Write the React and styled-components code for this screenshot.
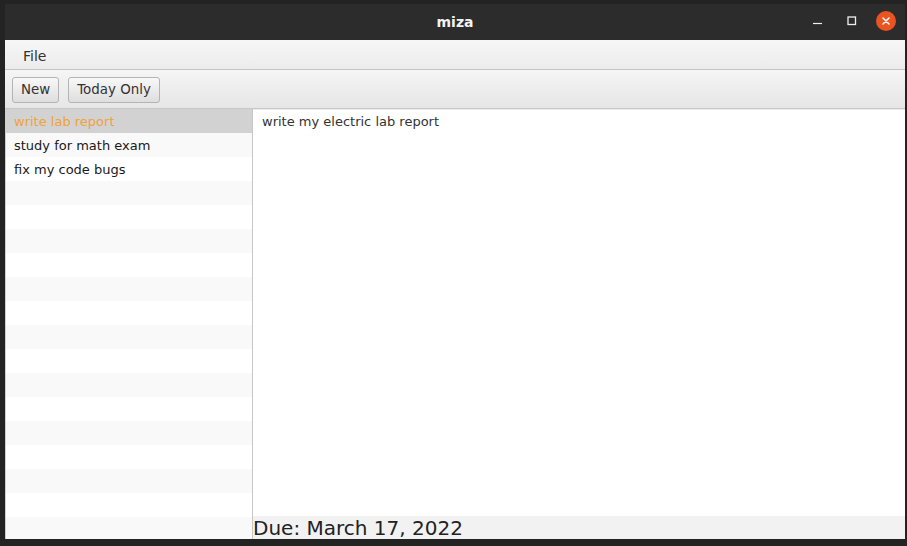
import styled, { createGlobalStyle } from "styled-components";

const Global = createGlobalStyle`
  html, body {
    margin: 0;
    padding: 0;
    background: #242424;
    overflow: hidden;
  }
  * { box-sizing: border-box; }
`;

const Desktop = styled.div`
  width: 907px;
  height: 546px;
  padding: 4px 2px 7px 5px;
  background: #232323;
  font-family: "DejaVu Sans", "Liberation Sans", sans-serif;
`;

const Window = styled.div`
  width: 900px;
  height: 535px;
  display: flex;
  flex-direction: column;
  background: #f4f4f4;
`;

const TitleBar = styled.div`
  height: 36px;
  flex-shrink: 0;
  background: #2c2c2c;
  display: flex;
  align-items: center;
  justify-content: center;
  position: relative;
  color: #f2f2f2;
  font-weight: bold;
  font-size: 14px;
`;

const WinControls = styled.div`
  position: absolute;
  right: 9px;
  top: 7px;
  display: flex;
  align-items: center;
  gap: 14px;
`;

const Ctl = styled.div`
  width: 20px;
  height: 20px;
  display: flex;
  align-items: center;
  justify-content: center;
  border-radius: 50%;
  background: ${p => (p.close ? "#e95420" : "transparent")};
`;

const MenuBar = styled.div`
  height: 30px;
  flex-shrink: 0;
  display: flex;
  align-items: center;
  padding: 3px 0 0 18px;
  background: linear-gradient(#f6f6f6, #ececec);
  border-bottom: 1px solid #c4c4c4;
  font-size: 14px;
  color: #333;
`;

const ToolBar = styled.div`
  height: 39px;
  flex-shrink: 0;
  display: flex;
  align-items: center;
  gap: 9px;
  padding: 1px 7px 0;
  background: linear-gradient(#f5f5f5, #e6e6e6);
  border-bottom: 1px solid #c8c8c8;
`;

const Button = styled.button`
  height: 26px;
  padding: 0 8px;
  font-family: "DejaVu Sans", "Liberation Sans", sans-serif;
  font-size: 13.4px;
  color: #333;
  border: 1px solid #b4b4b4;
  border-radius: 3px;
  background: linear-gradient(#f8f8f8, #dedede);
`;

const Main = styled.div`
  flex: 1;
  display: flex;
  min-height: 0;
`;

const List = styled.div`
  width: 248px;
  border-left: 1px solid #cfcfcf;
  border-right: 1px solid #c6c6c6;
  background: #fff;
  overflow: hidden;
`;

const Row = styled.div`
  height: 24px;
  display: flex;
  align-items: center;
  padding-left: 8px;
  font-size: 13px;
  color: ${p => (p.selected ? "#f0a23a" : "#1a1a1a")};
  background: ${p => (p.selected ? "#d2d2d2" : p.odd ? "#f9f9f9" : "#ffffff")};
`;

const Right = styled.div`
  flex: 1;
  display: flex;
  flex-direction: column;
`;

const TextArea = styled.div`
  flex: 1;
  background: #fff;
  border-top: 1px solid #ececec;
  padding: 4px 9px;
  font-size: 13px;
  color: #333;
`;

const Status = styled.div`
  height: 23px;
  background: #f2f2f2;
  display: flex;
  align-items: center;
  font-size: 20px;
  color: #222;
  padding-top: 1px;
`;

const tasks = ["write lab report", "study for math exam", "fix my code bugs"];

export default function App() {
  const rows = Array.from({ length: 18 }, (_, i) => tasks[i] || "");
  return (
    <>
      <Global />
      <Desktop>
        <Window>
          <TitleBar>
            miza
            <WinControls>
              <Ctl>
                <svg width="12" height="12" viewBox="0 0 12 12">
                  <line x1="1" y1="8.5" x2="10" y2="8.5" stroke="#eee" strokeWidth="1.2" />
                </svg>
              </Ctl>
              <Ctl>
                <svg width="12" height="12" viewBox="0 0 12 12">
                  <rect x="2" y="2" width="7.5" height="7.5" fill="none" stroke="#eee" strokeWidth="1.3" />
                </svg>
              </Ctl>
              <Ctl close>
                <svg width="10" height="10" viewBox="0 0 10 10">
                  <path d="M2 2 L8 8 M8 2 L2 8" stroke="#fff" strokeWidth="1.5" strokeLinecap="round" />
                </svg>
              </Ctl>
            </WinControls>
          </TitleBar>
          <MenuBar>File</MenuBar>
          <ToolBar>
            <Button>New</Button>
            <Button>Today Only</Button>
          </ToolBar>
          <Main>
            <List>
              {rows.map((t, i) => (
                <Row key={i} selected={i === 0} odd={i % 2 === 1}>
                  {t}
                </Row>
              ))}
            </List>
            <Right>
              <TextArea>write my electric lab report</TextArea>
              <Status>Due: March 17, 2022</Status>
            </Right>
          </Main>
        </Window>
      </Desktop>
    </>
  );
}
